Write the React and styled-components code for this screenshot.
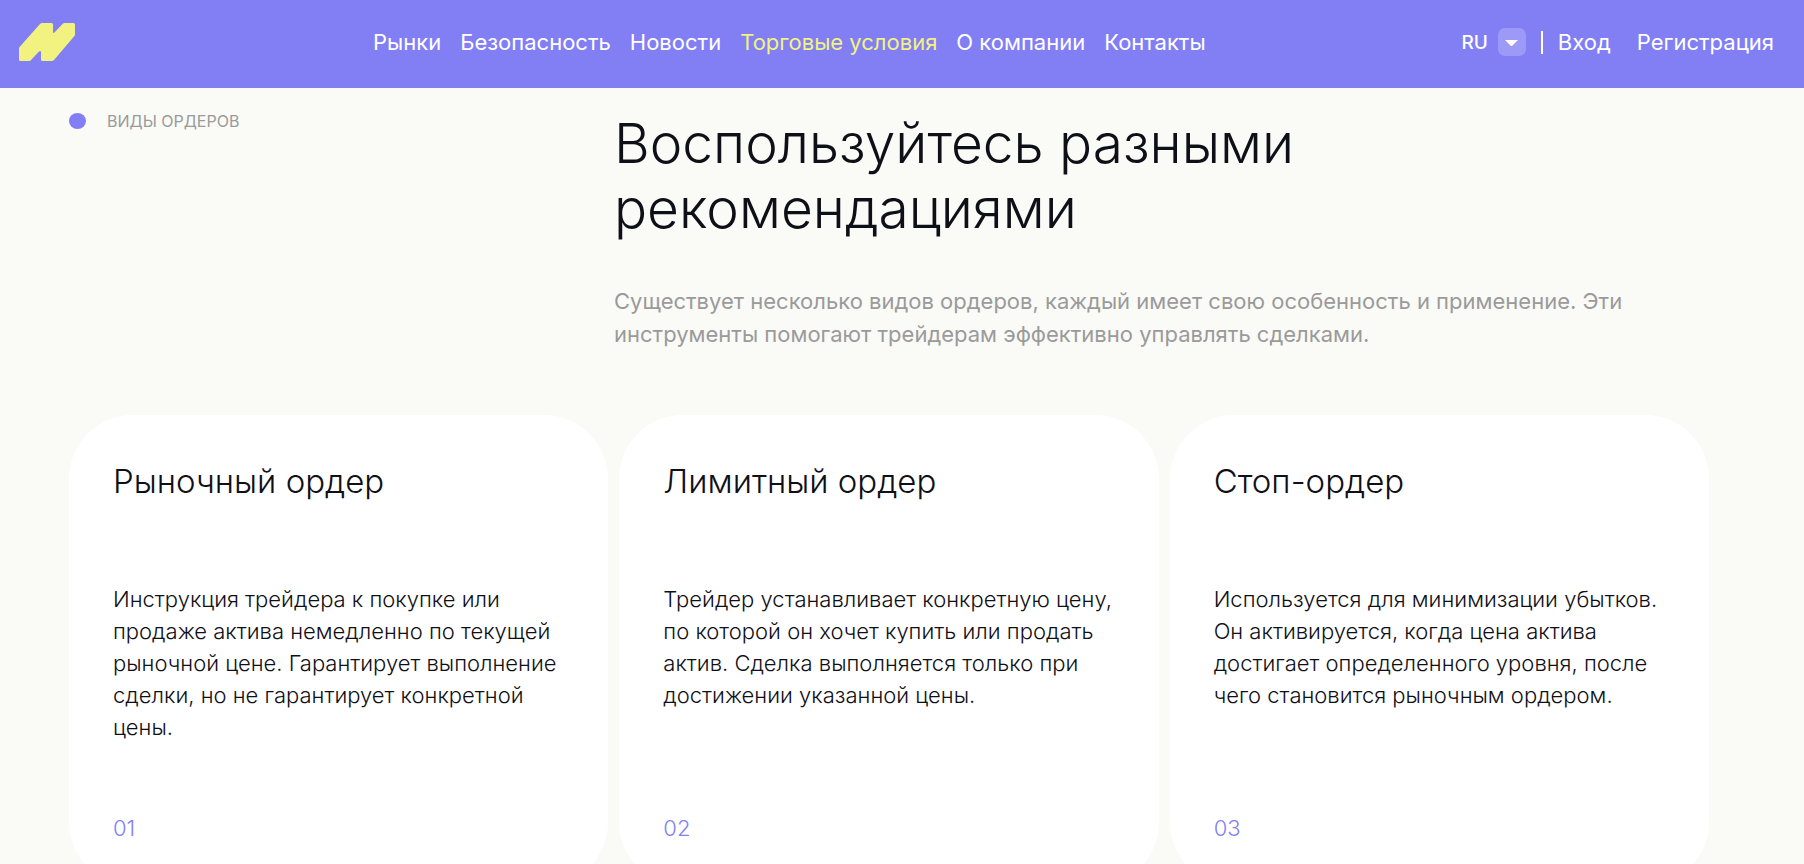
import React, { useState } from "react";
import styled, { createGlobalStyle } from "styled-components";

const NAV = [
  "Рынки",
  "Безопасность",
  "Новости",
  "Торговые условия",
  "О компании",
  "Контакты",
];

const ORDERS = [
  {
    id: "01",
    title: "Рыночный ордер",
    text: "Инструкция трейдера к покупке или продаже актива немедленно по текущей рыночной цене. Гарантирует выполнение сделки, но не гарантирует конкретной цены.",
  },
  {
    id: "02",
    title: "Лимитный ордер",
    text: "Трейдер устанавливает конкретную цену, по которой он хочет купить или продать актив. Сделка выполняется только при достижении указанной цены.",
  },
  {
    id: "03",
    title: "Стоп-ордер",
    text: "Используется для минимизации убытков. Он активируется, когда цена актива достигает определенного уровня, после чего становится рыночным ордером.",
  },
];

function App() {
  const [active, setActive] = useState("Торговые условия");

  return (
    <>
      <GlobalStyle />
      <Header>
        <LogoLink href="#" aria-label="Главная">
          <svg width="56" height="38" viewBox="0 0 56 38" fill="#f2f280">
            <path d="M23 0H32.500Q34 0 34 1.500V9Q34 10.500 35.500 9.500L43.500 1Q44.500 0 46 0H54.500Q56 0 56 1.500V11.500Q56 12.500 55 13.500L35 37Q34 38 33 38H23.500Q22 38 22 36.500V29.500Q22 27 20 28.500L12.500 36.500Q11.500 38 10 38H1.500Q0 38 0 36.500V25.500Q0 24.500 1 23.500L21 1Q22 0 23 0Z" />
          </svg>
        </LogoLink>
        <Nav>
          {NAV.map((item) => (
            <NavLink
              key={item}
              href="#"
              $active={item === active}
              onClick={() => setActive(item)}
            >
              {item}
            </NavLink>
          ))}
        </Nav>
        <Account>
          <Lang>RU</Lang>
          <LangButton type="button" aria-label="Выбрать язык">
            <svg width="13" height="7" viewBox="0 0 13 7" fill="#ffffff">
              <path d="M0 0H13L7.500 5.500Q6.500 6.500 5.500 5.500Z" />
            </svg>
          </LangButton>
          <Divider />
          <NavLink href="#">Вход</NavLink>
          <RegisterLink href="#">Регистрация</RegisterLink>
        </Account>
      </Header>
      <Main>
        <Intro>
          <Label>
            <Dot />
            Виды ордеров
          </Label>
          <div>
            <Title>Воспользуйтесь разными рекомендациями</Title>
            <Lead>
              Существует несколько видов ордеров, каждый имеет свою особенность
              и применение. Эти инструменты помогают трейдерам эффективно
              управлять сделками.
            </Lead>
          </div>
        </Intro>
        <Cards>
          {ORDERS.map((order) => (
            <Card key={order.id}>
              <CardTitle>{order.title}</CardTitle>
              <CardText>{order.text}</CardText>
              <CardNumber>{order.id}</CardNumber>
            </Card>
          ))}
        </Cards>
      </Main>
    </>
  );
}

const GlobalStyle = createGlobalStyle`
  * {
    box-sizing: border-box;
  }
  body {
    margin: 0;
    background-color: #fafaf7;
    color: #0f1017;
    font-family: Inter, "Liberation Sans", sans-serif;
  }
  h1, h2, p {
    margin: 0;
  }
`;

const Header = styled.header`
  display: flex;
  align-items: center;
  min-height: 88px;
  padding: 0 30px 4px 19px;
  background-color: #827ff5;
`;

const LogoLink = styled.a`
  display: flex;
`;

const Nav = styled.nav`
  display: flex;
  gap: 19px;
  margin-left: 298px;
`;

const NavLink = styled.a`
  color: ${({ $active }) => ($active ? "#f2f280" : "#ffffff")};
  font-size: 22px;
  line-height: 28px;
  white-space: nowrap;
  text-decoration: none;
`;

const Account = styled.div`
  display: flex;
  align-items: center;
  margin-left: auto;
`;

const Lang = styled.span`
  color: #ffffff;
  font-size: 19px;
  font-weight: 500;
`;

const LangButton = styled.button`
  display: flex;
  align-items: center;
  justify-content: center;
  width: 28px;
  height: 28px;
  margin-left: 10px;
  padding: 2px 0 0;
  border: none;
  border-radius: 7px;
  background-color: #9c99f7;
  cursor: pointer;
`;

const Divider = styled.span`
  width: 2px;
  height: 23px;
  margin: 0 15px;
  background-color: #ffffff;
`;

const RegisterLink = styled(NavLink)`
  margin-left: 26px;
`;

const Main = styled.main`
  padding: 0 95px 0 69px;
`;

const Intro = styled.section`
  display: grid;
  grid-template-columns: minmax(0, 545px) 1fr;
  padding-top: 23px;
`;

const Label = styled.p`
  display: flex;
  align-items: center;
  gap: 21px;
  height: 20px;
  color: #9a9a9b;
  font-size: 16px;
  text-transform: uppercase;
`;

const Dot = styled.span`
  width: 17px;
  height: 16px;
  border-radius: 50%;
  background-color: #827ff5;
`;

const Title = styled.h1`
  max-width: 760px;
  font-size: 55px;
  font-weight: 300;
  line-height: 65px;
`;

const Lead = styled.p`
  max-width: 1020px;
  margin-top: 44px;
  color: #9a9a9b;
  font-size: 22px;
  line-height: 33px;
`;

const Cards = styled.section`
  display: grid;
  grid-template-columns: repeat(3, 1fr);
  gap: 11px;
  margin-top: 64px;
`;

const Card = styled.article`
  display: flex;
  flex-direction: column;
  min-height: 471px;
  padding: 44px;
  border-radius: 64px;
  background-color: #ffffff;
`;

const CardTitle = styled.h2`
  font-size: 33px;
  font-weight: 300;
  line-height: 44px;
`;

const CardText = styled.p`
  margin-top: 80px;
  font-size: 22px;
  font-weight: 300;
  line-height: 32px;
`;

const CardNumber = styled.span`
  margin-top: auto;
  color: #827ff5;
  font-size: 22px;
  font-weight: 300;
  line-height: 28px;
`;

export default App;
